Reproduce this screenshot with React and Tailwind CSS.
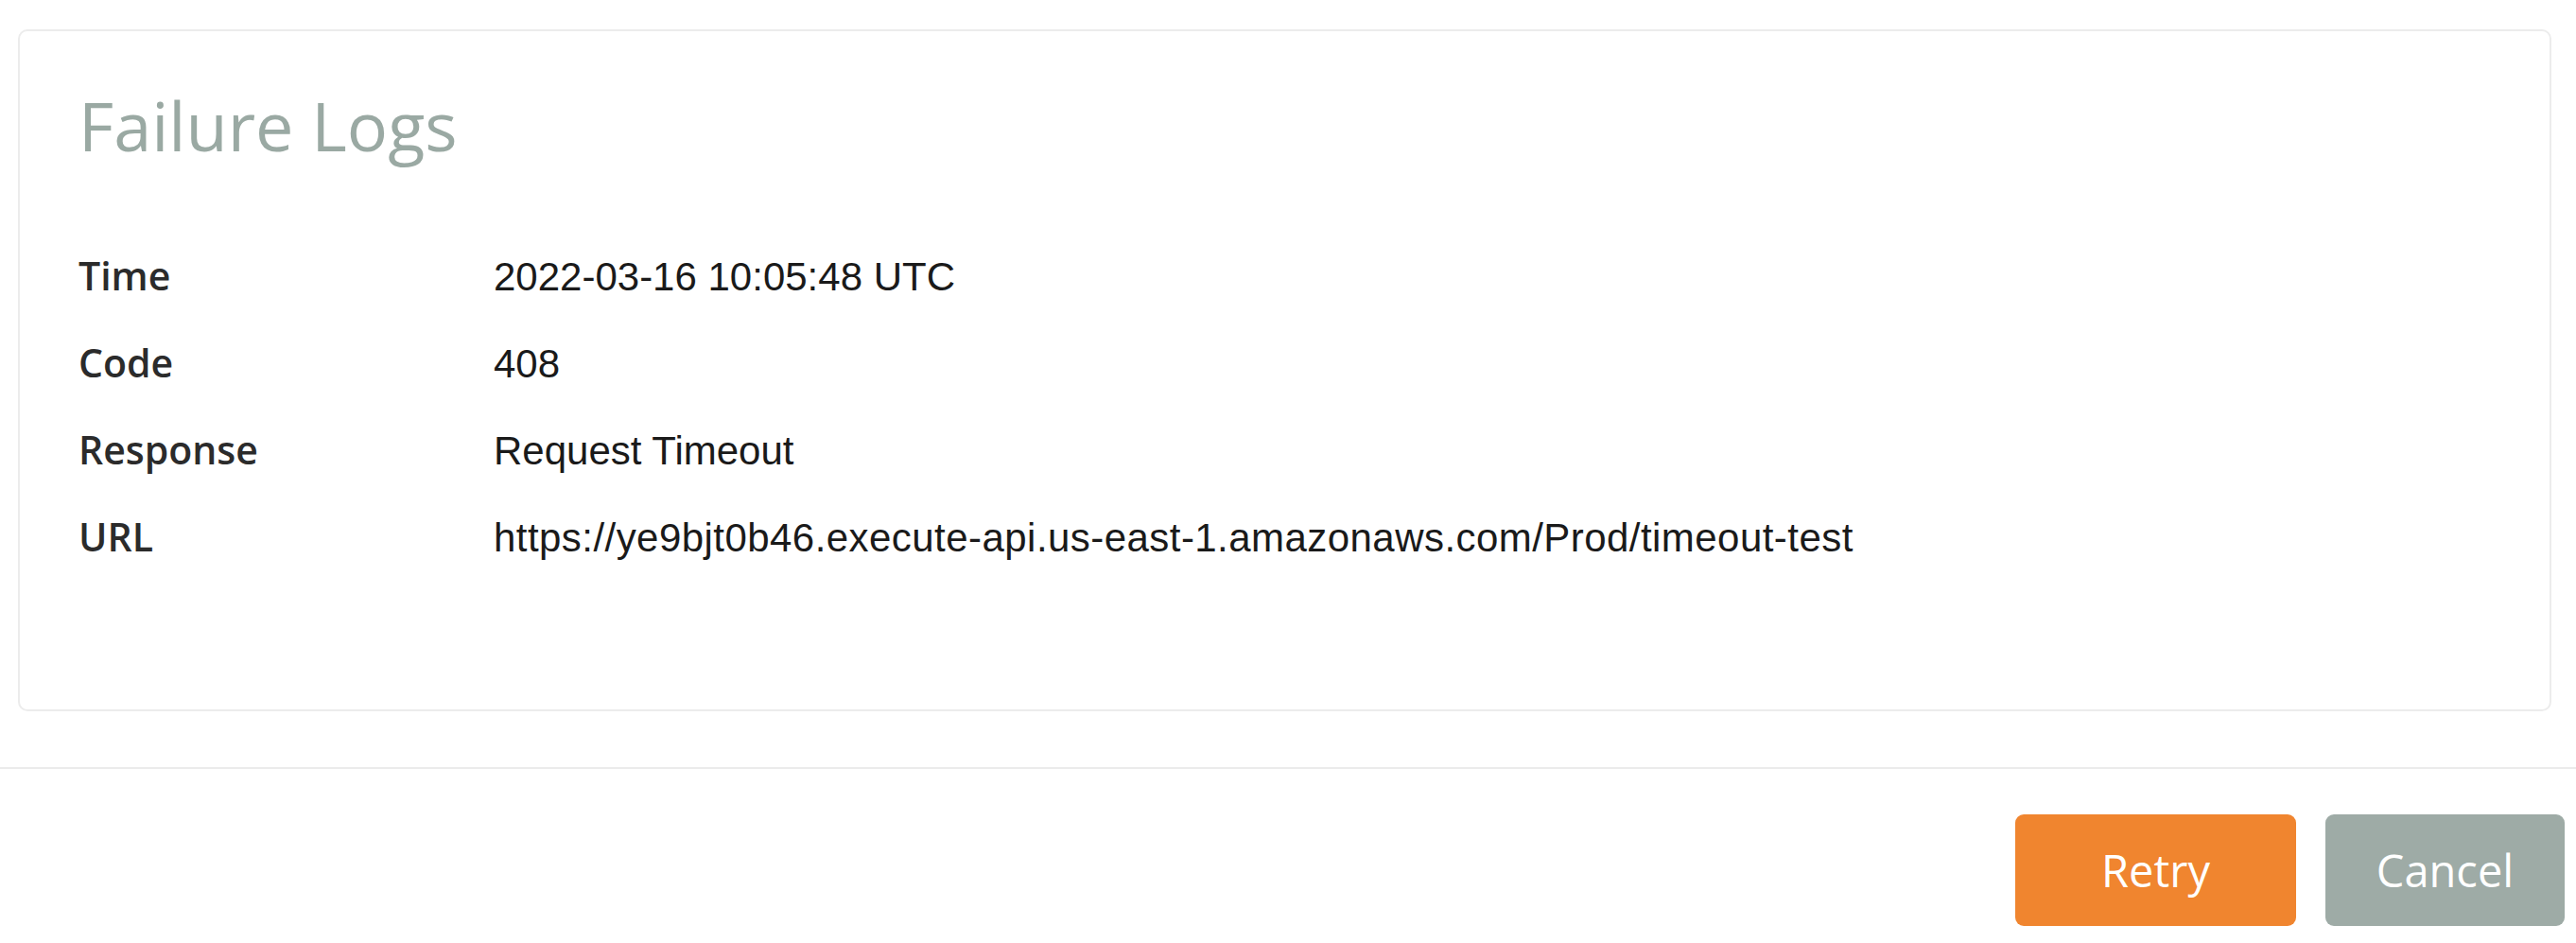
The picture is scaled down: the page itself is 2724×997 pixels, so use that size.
import React from "react";

const rows = [
  { label: "Time", value: "2022-03-16 10:05:48 UTC" },
  { label: "Code", value: "408" },
  { label: "Response", value: "Request Timeout" },
  { label: "URL", value: "https://ye9bjt0b46.execute-api.us-east-1.amazonaws.com/Prod/timeout-test", wide: true },
];

const App = () => {
  return (
    <div className="w-full h-[997px] bg-white pt-[31px]">
      <div className="ml-[19px] mr-[26px] border-2 border-[#ececec] rounded-[10px] pt-[56px] pb-[137px] pl-[62px]">
        <h1 className="font-['Open_Sans',sans-serif] text-[72px] leading-[86px] font-normal text-[#9aa9a3]">
          Failure Logs
        </h1>
        <div className="mt-[70px]">
          {rows.map((r) => (
            <div key={r.label} className="flex items-baseline h-[92px] leading-[92px]">
              <div className="w-[439px] font-['Open_Sans',sans-serif] font-semibold text-[41px] text-[#2b2b2b]">
                {r.label}
              </div>
              <div
                className={
                  r.wide
                    ? "font-['Liberation_Sans',Arial,sans-serif] text-[42px] tracking-[0.45px] text-[#1a1a1a]"
                    : "font-['Liberation_Sans',Arial,sans-serif] text-[42px] text-[#1a1a1a]"
                }
              >
                {r.value}
              </div>
            </div>
          ))}
        </div>
      </div>

      <div className="mt-[59px] border-t-2 border-[#ebebeb]" />

      <div className="flex justify-end gap-[31px] pt-[48px] pr-[12px]">
        <button className="w-[297px] h-[118px] rounded-[9px] bg-[#f0852f] text-white font-['Open_Sans',sans-serif] text-[47px]">
          Retry
        </button>
        <button className="w-[253px] h-[118px] rounded-[9px] bg-[#9eaba6] text-white font-['Open_Sans',sans-serif] text-[47px]">
          Cancel
        </button>
      </div>
    </div>
  );
};

export default App;
